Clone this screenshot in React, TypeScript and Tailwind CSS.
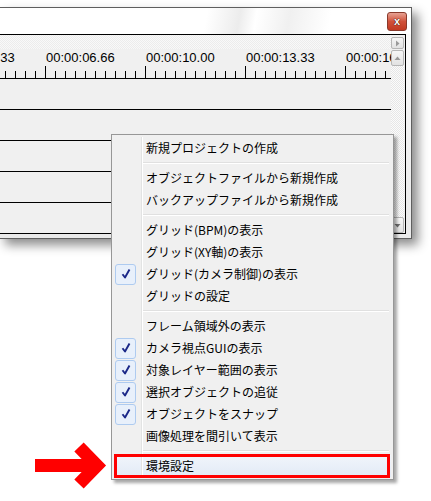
import React from 'react';

type Item = { label: string; checked?: boolean; selected?: boolean } | 'sep';

const menuItems: Item[] = [
    { label: '新規プロジェクトの作成' },
    'sep',
    { label: 'オブジェクトファイルから新規作成' },
    { label: 'バックアップファイルから新規作成' },
    'sep',
    { label: 'グリッド(BPM)の表示' },
    { label: 'グリッド(XY軸)の表示' },
    { label: 'グリッド(カメラ制御)の表示', checked: true },
    { label: 'グリッドの設定' },
    'sep',
    { label: 'フレーム領域外の表示' },
    { label: 'カメラ視点GUIの表示', checked: true },
    { label: '対象レイヤー範囲の表示', checked: true },
    { label: '選択オブジェクトの追従', checked: true },
    { label: 'オブジェクトをスナップ', checked: true },
    { label: '画像処理を間引いて表示' },
    'sep',
    { label: '環境設定', selected: true },
];

const labels = [
    { x: -55, t: '00:00:03.33' },
    { x: 45, t: '00:00:06.66' },
    { x: 145, t: '00:00:10.00' },
    { x: 245, t: '00:00:13.33' },
    { x: 345, t: '00:00:16.66' },
];

const Ruler = () => {
    const ticks = [];
    for (let x = 5; x < 391; x += 10) {
        const major = (x - 45) % 100 === 0;
        ticks.push(<line key={x} x1={x + 0.5} x2={x + 0.5} y1={major ? 0 : 5} y2={12} stroke="#000" strokeWidth={1} />);
    }
    return (
        <div className="relative h-[44px] border-b border-black overflow-hidden">
            <div className="h-[14px] bg-[repeating-conic-gradient(#ececec_0_25%,#f9f9f9_0_50%)] bg-[length:2px_2px]" />
            {labels.map((l) => (
                <span
                    key={l.t}
                    className="absolute top-[49px] -translate-y-[34px] text-[13px] leading-[15px] text-black whitespace-nowrap"
                    style={{ left: l.x + 1 }}
                >
                    {l.t}
                </span>
            ))}
            <svg className="absolute left-0 bottom-0" width="391" height="12">
                {ticks}
            </svg>
        </div>
    );
};

const ScrollBtn = ({ dir, h }: { dir: 'right' | 'up' | 'down'; h: string }) => (
    <div className={`${h} flex items-center justify-center border border-[#b6b6b6] bg-gradient-to-b from-[#f6f6f6] to-[#e2e2e2] rounded-[2px]`}>
        <svg width="7" height="7" viewBox="0 0 7 7">
            {dir === 'right' && <path d="M2 0.5 L5.5 3.5 L2 6.5 Z" fill="#9a9a9a" />}
            {dir === 'up' && <path d="M0.5 5 L3.5 1.5 L6.5 5 Z" fill="#9a9a9a" />}
            {dir === 'down' && <path d="M0.5 2 L3.5 5.5 L6.5 2 Z" fill="#6f6f6f" />}
        </svg>
    </div>
);

const Check = () => (
    <div className="w-[21px] h-[21px] rounded-[3px] border border-[#aecbf0] bg-[#e8f0fb] flex items-center justify-center">
        <svg width="12" height="12" viewBox="0 0 12 12">
            <path d="M2.5 6.2 L5 9.5 L9.5 1.5" fill="none" stroke="#1b2888" strokeWidth="1.9" strokeLinejoin="round" />
        </svg>
    </div>
);

const App = () => {
    return (
        <div className="relative w-[431px] h-[501px] bg-white overflow-hidden font-['Liberation_Sans',sans-serif]">
            {/* window */}
            <div className="mt-[7px] -ml-px w-[413px] h-[232px] border border-[#5f5f5f] bg-gradient-to-b from-[#fdfdfd] via-[#f2f2f2] to-[#e9e9e9] shadow-[6px_6px_10px_rgba(0,0,0,0.45)] flex flex-col">
                <div className="h-[26px] flex items-start justify-end pr-[4px] pt-[4px] bg-[linear-gradient(100deg,#fff_0%,#fff_50%,#ececec_58%,#fff_62%,#f0f0f0_70%,#fff_80%)]">
                    <div className="w-[20px] h-[19px] rounded-[3px] border border-[#8a3a2c] bg-gradient-to-b from-[#e6a193] via-[#d0513a] to-[#c23a22] flex items-center justify-center">
                        <span className="text-white text-[11px] leading-none font-bold [text-shadow:0_0_1px_#3a0a00,0_0_1px_#3a0a00]">x</span>
                    </div>
                </div>
                <div className="h-[200px] mr-[5px] border-t border-r border-b border-black bg-[#f0f0f0] flex">
                    <div className="w-[391px] flex flex-col">
                        <Ruler />
                        <div className="h-[31px] border-b border-black" />
                        <div className="h-[31px] border-b border-black" />
                        <div className="h-[31px] border-b border-black" />
                        <div className="h-[31px] border-b border-black" />
                        <div className="flex-1" />
                    </div>
                    <div className="flex-1 flex flex-col pt-[2px] pr-px">
                        <ScrollBtn dir="right" h="h-[12px]" />
                        <div className="mt-[1px]">
                            <ScrollBtn dir="up" h="h-[16px]" />
                        </div>
                        <div className="flex-1 bg-[repeating-conic-gradient(#e6e6e6_0_25%,#fbfbfb_0_50%)] bg-[length:2px_2px]" />
                        <ScrollBtn dir="down" h="h-[16px]" />
                    </div>
                </div>
            </div>

            {/* context menu */}
            <div className="absolute left-[111px] top-[134px] w-[283px] border border-[#979797] bg-[#f0f0f0] p-[2px] shadow-[3px_3px_3px_rgba(0,0,0,0.35)] font-['Noto_Sans_CJK_JP',sans-serif] text-[12px] text-black">
                {menuItems.map((it, i) =>
                    it === 'sep' ? (
                        <div key={i} className="flex h-[8px]">
                            <div className="w-[27px]" />
                            <div className="w-[2px] border-l border-[#e2e3e3] bg-white" />
                            <div className="flex-1 flex flex-col justify-center pr-[2px]">
                                <div className="h-px bg-[#e0e0e0]" />
                                <div className="h-px bg-white" />
                            </div>
                        </div>
                    ) : (
                        <div key={i} className={`relative flex h-[22px] ${it.selected ? 'bg-gradient-to-b from-[#f1f5fb] to-[#e2eaf6]' : ''}`}>
                            <div className="w-[27px] flex items-center pl-px">{it.checked && <Check />}</div>
                            <div className="w-[2px] border-l border-[#e2e3e3] bg-white" />
                            <div className="flex-1 flex items-center pl-[3px] leading-none whitespace-nowrap">{it.label}</div>
                            {it.selected && <div className="absolute -top-px -bottom-px left-0 right-px border-[3px] border-[#ff0000]" />}
                        </div>
                    )
                )}
            </div>

            {/* red arrow */}
            <svg className="absolute left-[34px] top-[442px]" width="74" height="50" viewBox="0 0 74 50">
                <rect x="1" y="17" width="58" height="13" fill="#ff0000" />
                <polyline points="45,5 63,23.5 45,42" fill="none" stroke="#ff0000" strokeWidth="13" strokeLinejoin="miter" strokeMiterlimit="4" />
            </svg>
        </div>
    );
};

export default App;
